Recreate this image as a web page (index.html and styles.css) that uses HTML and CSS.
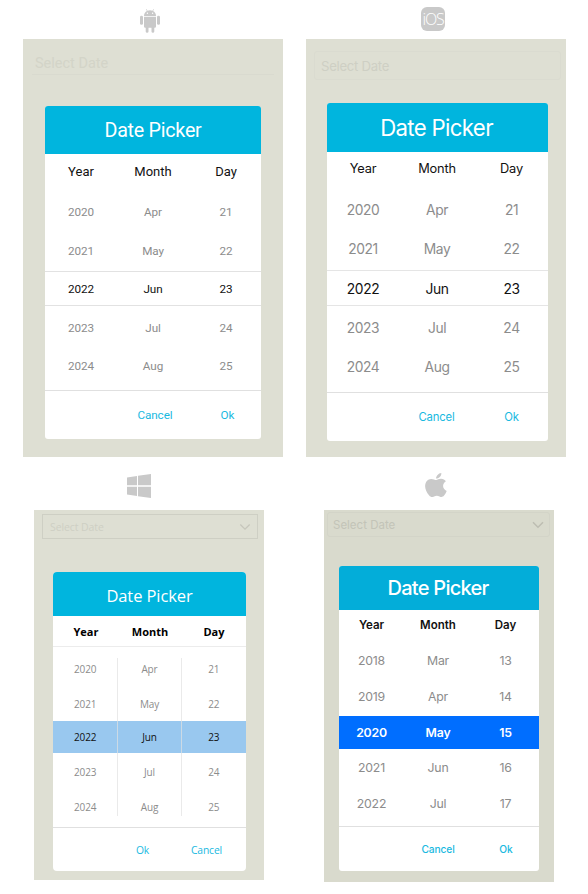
FILE: index.html
```html
<!DOCTYPE html>
<html lang="en">
<head>
<meta charset="utf-8">
<title>Date Picker</title>
<link rel="stylesheet" href="styles.css">
</head>
<body>
<main class="gallery">
  <section class="platform android">
    <div class="logo">
      <svg width="20" height="24" viewBox="0 0 20 24" fill="#c9c9c9"><path d="M4 7C4 4.700 5.200 3 7 2.100L6 .4l.4-.3 1.100 1.700a7 7 0 0 1 5 0L13.600.1l.4.3-1 1.700C14.800 3 16 4.700 16 7z"/><circle cx="7.400" cy="4.300" r=".7" fill="#fff"/><circle cx="12.600" cy="4.300" r=".7" fill="#fff"/><path d="M4 7.700h12v9.800a1.300 1.300 0 0 1-1.300 1.300H14.300V22.400a1.400 1.400 0 0 1-2.800 0v-3.600H8.500V22.400A1.400 1.400 0 0 1 5.700 22.400v-3.600h-.4A1.300 1.300 0 0 1 4 17.500z"/><rect x="0" y="6.800" width="3" height="9" rx="1.400"/><rect x="17" y="6.800" width="3" height="9" rx="1.400"/></svg>
    </div>
    <div class="screen">
      <div class="field"><span>Select Date</span></div>
      <div class="dialog">
        <h2 class="title"><span>Date Picker</span></h2>
        <div class="heads cols"><span>Year</span><span>Month</span><span>Day</span></div>
        <div class="rows">
          <div class="row cols"><span>2020</span><span>Apr</span><span>21</span></div>
          <div class="row cols"><span>2021</span><span>May</span><span>22</span></div>
          <div class="row cols selected"><span>2022</span><span>Jun</span><span>23</span></div>
          <div class="row cols"><span>2023</span><span>Jul</span><span>24</span></div>
          <div class="row cols"><span>2024</span><span>Aug</span><span>25</span></div>
        </div>
        <div class="actions"><span></span><span>Cancel</span><span>Ok</span></div>
      </div>
    </div>
  </section>

  <section class="platform ios">
    <div class="logo">
      <div class="ios-badge"><span>iOS</span></div>
    </div>
    <div class="screen">
      <div class="field"><span>Select Date</span></div>
      <div class="dialog">
        <h2 class="title"><span>Date Picker</span></h2>
        <div class="heads cols"><span>Year</span><span>Month</span><span>Day</span></div>
        <div class="rows">
          <div class="row cols"><span>2020</span><span>Apr</span><span>21</span></div>
          <div class="row cols"><span>2021</span><span>May</span><span>22</span></div>
          <div class="row cols selected"><span>2022</span><span>Jun</span><span>23</span></div>
          <div class="row cols"><span>2023</span><span>Jul</span><span>24</span></div>
          <div class="row cols"><span>2024</span><span>Aug</span><span>25</span></div>
        </div>
        <div class="actions"><span></span><span>Cancel</span><span>Ok</span></div>
      </div>
    </div>
  </section>

  <section class="platform windows">
    <div class="logo">
      <svg width="24" height="24" viewBox="0 0 24 24" fill="#c9c9c9"><path d="M0 3.400 10 2v9.200H0zM11 1.800 24 0v11.200H11zM0 12.700h10V22L0 20.600zM11 12.700h13V24l-13-1.800z"/></svg>
    </div>
    <div class="screen">
      <div class="field"><span>Select Date</span><svg width="12" height="8" viewBox="0 0 12 8" fill="none" stroke="#c6c6bb" stroke-width="1.300"><path d="m1.300 1.500 4.700 4.700 4.700-4.700"/></svg></div>
      <div class="dialog">
        <h2 class="title"><span>Date Picker</span></h2>
        <div class="heads cols"><span>Year</span><span>Month</span><span>Day</span></div>
        <div class="rows">
          <div class="row cols"><span>2020</span><span>Apr</span><span>21</span></div>
          <div class="row cols"><span>2021</span><span>May</span><span>22</span></div>
          <div class="row cols selected"><span>2022</span><span>Jun</span><span>23</span></div>
          <div class="row cols"><span>2023</span><span>Jul</span><span>24</span></div>
          <div class="row cols"><span>2024</span><span>Aug</span><span>25</span></div>
        </div>
        <div class="actions"><span></span><span>Ok</span><span>Cancel</span></div>
      </div>
    </div>
  </section>

  <section class="platform mac">
    <div class="logo">
      <svg width="22" height="24" viewBox="0 0 22 24" fill="#c9c9c9"><path d="M16.300 0c.3 2.700-2 5.600-5.200 5.600C10.900 2.900 13.500.3 16.300 0z"/><path d="M11.300 7c1 0 2.500-1.300 4.800-1.200 2 .1 3.700.9 4.800 2.500-4.200 2.700-3.500 7.900.8 9.600-.7 1.800-1.500 3.300-2.600 4.600-1.600 1.900-3 1.600-4.600.9-1.900-.8-3.500-.8-5.400 0-2 .9-3.400.8-4.900-.9C.3 18.100-1 12.700 1.100 9c1.100-2 3.100-3.100 5.200-3.100 2 0 3.600 1.100 5 1.100z"/></svg>
    </div>
    <div class="screen">
      <div class="field"><span>Select Date</span><svg width="12" height="8" viewBox="0 0 12 8" fill="none" stroke="#bdbdb2" stroke-width="1.500"><path d="m1 1.300 5 5 5-5"/></svg></div>
      <div class="dialog">
        <h2 class="title"><span>Date Picker</span></h2>
        <div class="heads cols"><span>Year</span><span>Month</span><span>Day</span></div>
        <div class="rows">
          <div class="row cols"><span>2018</span><span>Mar</span><span>13</span></div>
          <div class="row cols"><span>2019</span><span>Apr</span><span>14</span></div>
          <div class="row cols selected"><span>2020</span><span>May</span><span>15</span></div>
          <div class="row cols"><span>2021</span><span>Jun</span><span>16</span></div>
          <div class="row cols"><span>2022</span><span>Jul</span><span>17</span></div>
        </div>
        <div class="actions"><span></span><span>Cancel</span><span>Ok</span></div>
      </div>
    </div>
  </section>
</main>
</body>
</html>
```
FILE: styles.css
```css
* { box-sizing: border-box; }

body {
  margin: 0;
  width: 588px;
  height: 894px;
  background: #fff;
  overflow: hidden;
}

.gallery {
  display: grid;
  grid-template-columns: 260px 260px;
  grid-template-rows: 457px 437px;
  column-gap: 23px;
  padding-left: 23px;
}

.platform {
  display: flex;
  flex-direction: column;
  align-items: flex-start;
}

.logo { display: flex; flex: none; }
.logo svg { display: block; }

.ios-badge {
  display: flex;
  align-items: center;
  justify-content: center;
  width: 24px;
  height: 24px;
  border-radius: 6px;
  background: #c9c9c9;
  color: #fff;
  font: 300 16px/24px "Open Sans", sans-serif;
  letter-spacing: -1.2px;
}

.screen { background: #dedfd3; }

.field {
  display: flex;
  align-items: center;
  justify-content: space-between;
  color: #d0d1c6;
  white-space: nowrap;
}

.dialog {
  display: flex;
  flex-direction: column;
  background: #fff;
  border-radius: 3px;
  overflow: hidden;
  white-space: nowrap;
}

.title {
  display: flex;
  align-items: center;
  justify-content: center;
  flex: none;
  margin: 0;
  background: #00b5de;
  color: #fff;
  font-weight: 400;
}

.cols {
  display: grid;
  grid-template-columns: repeat(3, 1fr);
  align-items: center;
  justify-items: center;
}

.heads { color: #111; flex: none; }
.rows { flex: none; display: flex; flex-direction: column; }
.row { color: #8c8c8c; flex: none; }
.row.selected { color: #111; }

.actions {
  display: grid;
  align-items: center;
  justify-items: center;
  flex: 1;
  border-top: 1px solid #e0e0e0;
  color: #19b9df;
}

/* Android */
.android { font-family: Roboto, sans-serif; }
.android .logo { height: 39px; padding: 9px 0 0 117px; }
.android .screen { width: 260px; height: 418px; padding: 10px 9px 0; }
.android .field { height: 26px; padding: 3px 3px 0 3px; border-bottom: 1px solid #d9dacf; font-size: 14.5px; color: #d3d4c8; }
.android .dialog { width: 216px; height: 333px; margin: 31px 0 0 13px; }
.android .title { height: 48px; font-size: 19.7px; letter-spacing: -0.25px; padding-top: 1px; }
.android .cols { grid-template-columns: 72px 72px 74px; }
.android .heads { height: 35px; font-size: 13px; }
.android .rows { height: 201px; padding-top: 4px; font-size: 11.7px; letter-spacing: -0.1px; }
.android .row { height: 38.6px; }
.android .row.selected { height: 35px; margin: 1px 0 2.4px; border: solid #e2e2e2; border-width: 1px 0; }
.android .actions { grid-template-columns: 74px 72px 1fr; font-size: 11.7px; letter-spacing: -0.1px; }
.android .actions span:last-child { padding-left: 3px; }

/* iOS */
.ios { font-family: Inter, sans-serif; }
.ios .logo { height: 39px; padding: 7px 0 0 115px; }
.ios .screen { width: 260px; height: 418px; padding: 12px 5px 0 8px; }
.ios .field { height: 29px; padding: 0 6px; border: 1px solid #dadbd0; border-radius: 3px; font-size: 13.2px; letter-spacing: -0.3px; color: #cecfc4; }
.ios .dialog { width: 221px; height: 338px; margin: 23px 0 0 13px; }
.ios .title { height: 49px; padding-right: 2px; font-size: 22.2px; letter-spacing: -0.65px; }
.ios .cols { grid-template-columns: 72px 76px 73px; }
.ios .heads { height: 33px; font-size: 12.8px; letter-spacing: -0.2px; }
.ios .rows { height: 207px; padding-top: 5px; font-size: 13.8px; letter-spacing: -0.4px; }
.ios .row { height: 39.5px; }
.ios .row.selected { height: 36px; margin: 1px 0 2px; padding-top: 1px; border: solid #e5e5e5; border-width: 1px 0; }
.ios .actions { grid-template-columns: 73px 73px 1fr; font-size: 11.3px; letter-spacing: -0.15px; }
.ios .actions span:last-child { padding-left: 2px; }

/* Windows */
.windows { font-family: "Open Sans", sans-serif; }
.windows .logo { height: 53px; padding: 17px 0 0 104px; }
.windows .screen { width: 230px; height: 370px; margin-left: 11px; padding: 4px 6px 0 8px; }
.windows .field { height: 25px; padding: 0 6px 0 7px; border: 1px solid #cecfc4; font-size: 10.5px; letter-spacing: -0.1px; color: #cecfc4; }
.windows .dialog { width: 193px; height: 299px; margin: 33px 0 0 11px; border-radius: 4px; }
.windows .title { height: 44px; padding-top: 2px; font-size: 16.5px; letter-spacing: -0.1px; }
.windows .heads { height: 31px; padding-left: 1px; border-bottom: 1px solid #ececec; font-size: 11px; font-weight: 700; color: #000; }
.windows .rows { position: relative; height: 180px; padding-top: 4.8px; font-size: 10px; letter-spacing: -0.15px; }
.windows .rows::after {
  content: "";
  position: absolute;
  inset: 11px 64px 11px;
  border: solid rgba(225, 225, 225, 0.7);
  border-width: 0 1px;
}
.windows .row { height: 34.6px; }
.windows .row.selected { height: 32px; margin-bottom: 2px; background: #99c8ef; }
.windows .actions { grid-template-columns: 58px 63px 1fr; padding-right: 7px; font-size: 10.3px; letter-spacing: -0.1px; }

/* macOS */
.mac { font-family: Inter, sans-serif; }
.mac .logo { height: 53px; padding: 16px 0 0 119px; }
.mac .screen { width: 230px; height: 372px; margin-left: 18px; padding: 2px 4px 0 3px; background: #d9dacd; }
.mac .field { height: 25px; padding: 0 5px; border: 1px solid #d3d4c8; border-radius: 3px; font-size: 11.5px; color: #c3c4b8; }
.mac .dialog { width: 200px; height: 305px; margin: 29px 0 0 12px; }
.mac .title { height: 44px; padding-right: 2px; font-size: 20px; font-weight: 500; letter-spacing: -0.75px; background: #03add9; }
.mac .cols { grid-template-columns: 65px 68px 67px; }
.mac .heads { height: 29px; font-size: 11.5px; font-weight: 600; color: #111; }
.mac .rows { height: 187px; padding-top: 4px; font-size: 12.3px; letter-spacing: -0.2px; }
.mac .row { height: 35.7px; }
.mac .row.selected { height: 33px; margin: 1.3px 0; background: #006eff; color: #fff; font-weight: 600; }
.mac .actions { grid-template-columns: 66px 66px 1fr; font-size: 10.2px; font-weight: 500; letter-spacing: -0.1px; }
.mac .actions span:last-child { padding-left: 2px; }
```
